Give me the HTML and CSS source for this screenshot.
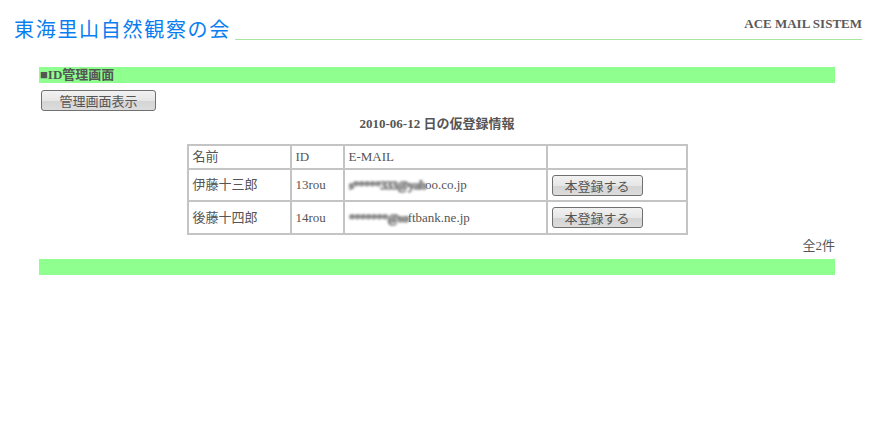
FILE: index.html
```html
<!DOCTYPE html>
<html lang="ja">
<head>
    <meta charset="UTF-8">
    <title>東海里山自然観察の会</title>
    <link rel="stylesheet" href="styles.css">
</head>
<body>
    <div class="header">
        <h1 class="site-title">東海里山自然観察の会</h1>
        <div class="header-line">ACE MAIL SISTEM</div>
    </div>

    <div class="main">
        <div class="section-bar">■ID管理画面</div>
        <button class="btn btn-admin">管理画面表示</button>

        <h2 class="list-title">2010-06-12 日の仮登録情報</h2>

        <table class="entry-table">
            <tr class="head-row">
                <td class="col-name">名前</td>
                <td class="col-id">ID</td>
                <td class="col-mail">E-MAIL</td>
                <td class="col-act"></td>
            </tr>
            <tr>
                <td>伊藤十三郎</td>
                <td>13rou</td>
                <td><span class="masked">s*****333@yah</span>oo.co.jp</td>
                <td><button class="btn btn-reg">本登録する</button></td>
            </tr>
            <tr class="last-row">
                <td>後藤十四郎</td>
                <td>14rou</td>
                <td><span class="masked">*******@so</span>ftbank.ne.jp</td>
                <td><button class="btn btn-reg">本登録する</button></td>
            </tr>
        </table>

        <div class="total">全2件</div>
        <div class="section-bar bottom-bar"></div>
    </div>
</body>
</html>
```

FILE: styles.css
```css
body {
    margin: 0;
    font-family: "Liberation Serif", "Noto Sans CJK JP", serif;
    font-size: 13px;
    color: #555;
    background: #fff;
}
.header {
    display: flex;
    align-items: flex-end;
    padding: 17px 12px 0 14px;
}
.site-title {
    margin: 0;
    font-family: "Noto Sans CJK JP", sans-serif;
    font-weight: normal;
    font-size: 20px;
    line-height: 24px;
    letter-spacing: 1.7px;
    color: #0a7ef0;
}
.header-line {
    flex: 1;
    margin-left: 4px;
    margin-bottom: 1px;
    border-bottom: 1px solid #a8e6a0;
    text-align: right;
    font-weight: bold;
    font-size: 13px;
    line-height: 14px;
    padding-bottom: 8px;
    color: #5a5a5a;
}
.main {
    width: 796px;
    margin: 26px auto 0;
}
.section-bar {
    background: #8fff8f;
    height: 16px;
    line-height: 16px;
    font-weight: bold;
    font-size: 13px;
    padding-left: 1px;
}
.btn {
    font-family: "Noto Sans CJK JP", sans-serif;
    font-size: 13px;
    color: #555;
    border: 1px solid #707070;
    border-radius: 3px;
    background: linear-gradient(#f2f2f2, #e6e6e6 50%, #d4d4d4 51%, #dcdcdc);
    padding: 0;
    line-height: 17px;
}
.btn-admin {
    display: block;
    width: 115px;
    height: 21px;
    margin: 7px 0 0 2px;
}
.list-title {
    margin: 4px 0 0;
    text-align: center;
    font-size: 13px;
    line-height: 18px;
    font-weight: bold;
}
.entry-table {
    margin: 11px auto 0;
    border-collapse: collapse;
    border: 1px solid #a0a0a0;
}
.entry-table td {
    border: 2px solid #c4c4c4;
    padding: 0 4px;
    height: 30px;
    line-height: 16px;
    vertical-align: middle;
}
.entry-table .head-row td {
    height: 22px;
}
.entry-table .last-row td {
    height: 31px;
}
.col-name { width: 93px; }
.col-id { width: 43px; }
.col-mail { width: 193px; }
.col-act { width: 130px; }
.masked {
    display: inline-block;
    color: #888;
    font-weight: bold;
    filter: blur(0.8px);
    text-shadow: 1px 0 0 #888, 0 1px 0 #999;
    letter-spacing: -1px;
}
.btn-reg {
    width: 91px;
    height: 21px;
}
.total {
    text-align: right;
    line-height: 18px;
    margin-top: 2px;
}
.bottom-bar {
    margin-top: 4px;
    height: 16px;
}
```
